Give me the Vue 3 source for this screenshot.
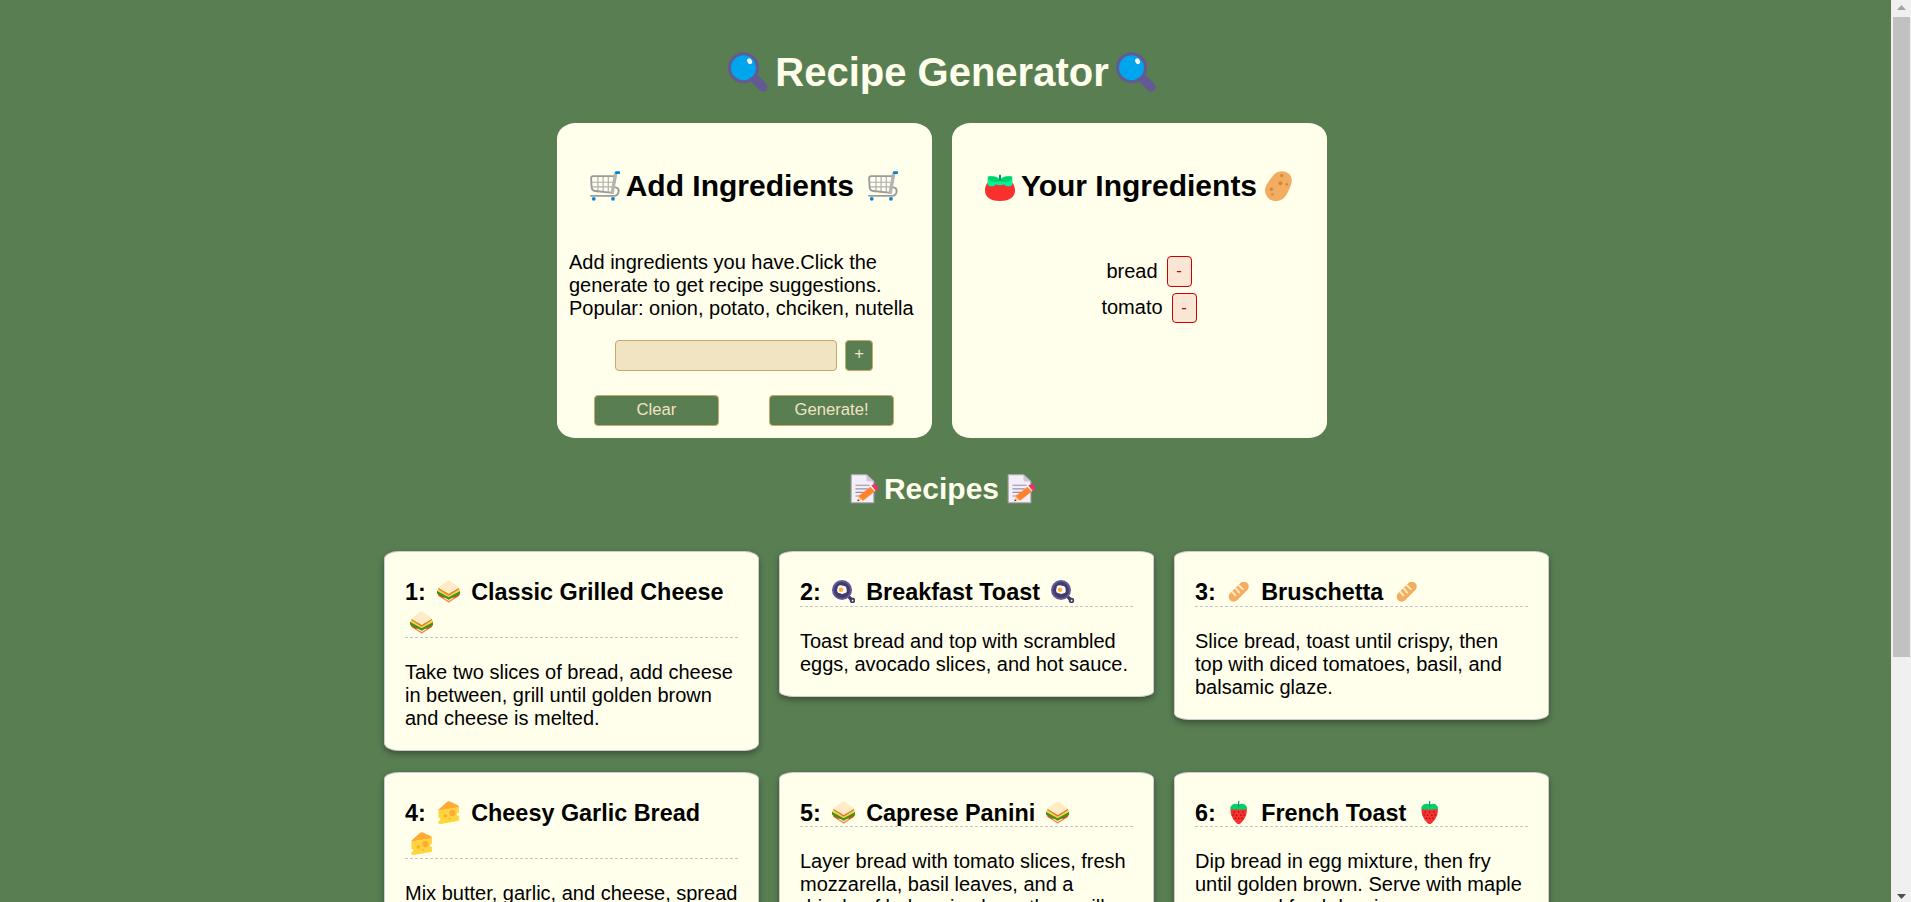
<script setup>
import { ref } from 'vue'

const query = ref('')
const ingredients = ref(['bread', 'tomato'])
const recipes = [
  { icon: 'sandwich', title: 'Classic Grilled Cheese', text: 'Take two slices of bread, add cheese in between, grill until golden brown and cheese is melted.' },
  { icon: 'pan', title: 'Breakfast Toast', text: 'Toast bread and top with scrambled eggs, avocado slices, and hot sauce.' },
  { icon: 'baguette', title: 'Bruschetta', text: 'Slice bread, toast until crispy, then top with diced tomatoes, basil, and balsamic glaze.' },
  { icon: 'cheese', title: 'Cheesy Garlic Bread', text: 'Mix butter, garlic, and cheese, spread on bread, and bake until bubbly.' },
  { icon: 'sandwich', title: 'Caprese Panini', text: 'Layer bread with tomato slices, fresh mozzarella, basil leaves, and a drizzle of balsamic glaze, then grill.' },
  { icon: 'strawberry', title: 'French Toast', text: 'Dip bread in egg mixture, then fry until golden brown. Serve with maple syrup and fresh berries.' },
]

function add() {
  const name = query.value.trim()
  if (name) ingredients.value.push(name)
  query.value = ''
}
</script>

<template>
  <svg class="sprite" aria-hidden="true">
    <symbol id="magnifier" viewBox="0 0 32 32">
      <path d="M22 22l6 6" stroke="#635994" stroke-width="7.4" stroke-linecap="round" />
      <circle cx="12.4" cy="12.6" r="11.2" fill="#00a6ed" stroke="#635994" stroke-width="2.4" />
      <ellipse cx="17.3" cy="7.4" rx="1.8" ry="2.4" transform="rotate(-32 17.3 7.4)" fill="#fff" />
    </symbol>
    <symbol id="cart" viewBox="0 0 32 32">
      <g fill="none" stroke="#9b9b9b" stroke-linecap="round" stroke-linejoin="round">
        <path d="M2.5 12h23M2 17h22.5M8.5 6v16M14 6v16M19.5 6v16" stroke="#b0b0b0" stroke-width="1.3" />
        <path d="M26.5 5.5H3.5Q1 5.5 1.2 8l.5 9q.3 4 3.8 4.3l19 2" stroke-width="2" />
        <path d="M27.3 3.5L23.8 22.5" stroke="#b4b4b4" stroke-width="3.6" />
        <path d="M27 17.5q4 .5 3.500 4.500-.6 4.500-5 4.500H1" stroke-width="2" />
      </g>
      <path d="M28 1.700h3.200" stroke="#0084ce" stroke-width="2.800" stroke-linecap="round" />
      <circle cx="4" cy="29.600" r="2" fill="#0084ce" />
      <circle cx="24.500" cy="29.600" r="2" fill="#0084ce" />
    </symbol>
    <symbol id="tomato" viewBox="0 0 32 32">
      <path d="M16 9C6 7 0 13 0 20.500c0 7 5 11.500 16 11.500s16-4.500 16-11.500C32 13 26 7 16 9z" fill="#f8312f" />
      <path d="M16 9C13 5 8 6 3 6c0 4-1 7 1 10 3 1 6 0 8-2 2 1.500 6 1.500 8 0 2 2 5 3 8 2 2-3 1-6 1-10-5 0-10-1-13 3z" fill="#00f397" />
      <path d="M3 6c6-1 10 0 13 4C13 13 7 12 3.500 9zM29 6c-6-1-10 0-13 4 3 3 9 2 12.500-1z" fill="#00d26a" />
      <path d="M16 9V4.800" stroke="#008463" stroke-width="2" stroke-linecap="round" />
    </symbol>
    <symbol id="potato" viewBox="0 0 32 32">
      <path d="M12 3.500C16-.5 23-.8 27 2.500c5 4 4 10 2 14.500-2 4-3 8-6 11-4 4.500-11 5.500-16 2-5.500-4-6-11-3-15.500C6.500 10.500 9 6.500 12 3.500z" fill="#f3ad61" />
      <g fill="#d3883e"><circle cx="20" cy="5" r="1.700" /><circle cx="18.500" cy="13" r="2.100" /><circle cx="25.300" cy="14.200" r="1.400" /><circle cx="9" cy="19.500" r="1.900" /><circle cx="10" cy="25" r="1.400" /></g>
    </symbol>
    <symbol id="memo" viewBox="0 0 32 32">
      <path d="M3.500.8h16.200L27.500 8v22.500H3.500z" fill="#f3eef8" stroke="#b4acbc" stroke-width="1.200" stroke-linejoin="round" />
      <path d="M19.700.8L27.500 8h-6.300q-1.500 0-1.500-1.500z" fill="#cdc4d6" />
      <path d="M8 12h15M8 15.800h13M8 19.600h9M8 23.400h5" stroke="#998ea4" stroke-width="1.200" />
      <path d="M10 29l1.500-6 5 4.500z" fill="#ffce7c" />
      <path d="M11.200 23.500L24 13.500l4.500 5.200L16 28.500z" fill="#ff822d" />
      <path d="M24 13.500l2-1.600 4.500 5.200-2 1.600z" fill="#f4f4f4" />
      <path d="M25.500 12.300q2.500-2 5 .4 2.500 2.800-.5 5.300z" fill="#f92f60" stroke="#f92f60" />
      <path d="M10 29l.5-2 1.700 1.400z" fill="#321b41" />
    </symbol>
    <symbol id="sandwich" viewBox="0 0 32 32">
      <path d="M2 20l14-7 14 7v2L16 31 2 22z" fill="#e39d56" />
      <path d="M2 17l14 8 14-8v4.500L16 29.500 2 21.500z" fill="#f8432f" />
      <path d="M9 22l7 4 7-4v3l-7 4-7-4z" fill="#ffe3b0" />
      <path d="M0 14.500l16 7.500L32 14.500v4q-1 2-3 2L25 22.500l-2 1.500-3 .5-4 2.500-4-2.500-3-.5L7 22.500l-4-2q-2 0-3-2z" fill="#44911b" />
      <path d="M1 12l15 8 15-8v3.500l-15 8-15-8z" fill="#fcd53f" />
      <path d="M2 10.500L16 19l14-8.500v2.200L16 21.500 2 12.700z" fill="#d67d39" />
      <path d="M14.500 1q1.500-.8 3 0L30 10 16 19 2 10z" fill="#ffebc4" />
    </symbol>
    <symbol id="pan" viewBox="0 0 32 32">
      <path d="M22 22l4 4" stroke="#433b6b" stroke-width="4.400" stroke-linecap="round" />
      <circle cx="28" cy="28" r="2.600" fill="none" stroke="#433b6b" stroke-width="2.400" />
      <circle cx="13.700" cy="13.700" r="12.300" fill="#433b6b" stroke="#635994" stroke-width="2.800" />
      <path d="M8 9q3-3 7-1 5 0 5 5 1 5-3 5-3 2-6 0-4 0-4-4z" fill="#fff" />
      <circle cx="12.300" cy="13.300" r="3" fill="#ffb02e" />
    </symbol>
    <symbol id="baguette" viewBox="0 0 32 32">
      <path d="M9 23L23 9" stroke="#f3ad61" stroke-width="13.500" stroke-linecap="round" />
      <path d="M7 16l4.500 5M12 11.500l4.500 5.500M16.500 7.500l5 5" fill="none" stroke="#ffebc4" stroke-width="2.700" stroke-linecap="round" />
    </symbol>
    <symbol id="cheese" viewBox="0 0 32 32">
      <path d="M2 13L30 8.500V16q-3 0-2.800 2.500.3 2 2.800 1.500V27L5 31.500q-3 .5-3-2.500v-1.500q3-.5 2.500-3Q4 23 2 23z" fill="#ffd53e" />
      <path d="M2 13q0-2 2-3L14 1q1.500-1.200 3.500-.3L28 5.500q2 1 2 3z" fill="#ffaa32" />
      <g fill="#ffaa32"><circle cx="21" cy="16.500" r="4.200" /><circle cx="11.500" cy="20.500" r="2.500" /><circle cx="17.500" cy="24.500" r="1.300" /></g>
    </symbol>
    <symbol id="strawberry" viewBox="0 0 32 32">
      <path d="M5 11Q4 19 8.500 25q3 4 6 6.500 1.500 1 3 0 3-2.500 6-6.500Q28 19 27 11 16 5 5 11z" fill="#f8312f" />
      <path d="M16 5C11 2 5 5 4.300 9.800q1 3 3.700.7 2 3 4.500.5 1.700 2.500 3.500 0 1.800 2.500 3.500 0 2.500 2.500 4.500-.5 2.700 2.300 3.700-.7C27 5 21 2 16 5z" fill="#00d26a" />
      <path d="M16 7V.8" stroke="#008463" stroke-width="1.500" stroke-linecap="round" />
      <g fill="#7d0a18"><circle cx="10" cy="15" r="1" /><circle cx="16" cy="15" r="1" /><circle cx="22" cy="15" r="1" /><circle cx="13" cy="19.500" r="1" /><circle cx="19" cy="19.500" r="1" /><circle cx="23.500" cy="19" r="1" /><circle cx="8.500" cy="19" r="1" /><circle cx="16" cy="24" r="1" /><circle cx="11.500" cy="23.500" r="1" /><circle cx="20.500" cy="23.500" r="1" /></g>
    </symbol>
  </svg>

  <div class="window">
    <main class="page">
      <h1><svg class="emoji"><use href="#magnifier" /></svg>Recipe Generator<svg class="emoji"><use href="#magnifier" /></svg></h1>

      <div class="panels">
        <section class="panel">
          <h2><svg class="emoji"><use href="#cart" /></svg>Add Ingredients <svg class="emoji"><use href="#cart" /></svg></h2>
          <p>Add ingredients you have.Click the generate to get recipe suggestions. Popular: onion, potato, chciken, nutella</p>
          <form class="entry" @submit.prevent="add">
            <input v-model="query" type="text" />
            <button class="plus">+</button>
          </form>
          <div class="actions">
            <button type="button" @click="ingredients = []">Clear</button>
            <button type="button">Generate!</button>
          </div>
        </section>

        <section class="panel">
          <h2><svg class="emoji"><use href="#tomato" /></svg>Your Ingredients<svg class="emoji"><use href="#potato" /></svg></h2>
          <ul>
            <li v-for="(item, i) in ingredients" :key="item">
              <span>{{ item }}</span>
              <button class="remove" @click="ingredients.splice(i, 1)">-</button>
            </li>
          </ul>
        </section>
      </div>

      <h2 class="recipes-title"><svg class="emoji"><use href="#memo" /></svg>Recipes<svg class="emoji"><use href="#memo" /></svg></h2>

      <div class="recipes">
        <article v-for="(r, i) in recipes" :key="r.title" class="recipe">
          <h3>{{ i + 1 }}: <svg class="emoji"><use :href="'#' + r.icon" /></svg> {{ r.title }} <svg class="emoji"><use :href="'#' + r.icon" /></svg></h3>
          <p>{{ r.text }}</p>
        </article>
      </div>
    </main>

    <aside class="scrollbar">
      <svg class="arrow" viewBox="0 0 9 5"><path d="M0 5L4.500 0 9 5z" fill="#a3a3a3" /></svg>
      <div class="thumb"></div>
      <svg class="arrow down" viewBox="0 0 9 5"><path d="M0 0h9L4.500 5z" fill="#505050" /></svg>
    </aside>
  </div>
</template>

<style>
body {
  background: #597e52;
  overflow: hidden;
}
</style>

<style scoped>
* {
  box-sizing: border-box;
}
.sprite {
  display: block;
  width: 0;
  height: 0;
}
.window {
  display: flex;
  width: 100%;
  height: 902px;
  overflow: hidden;
  background: #597e52;
  font-family: "Liberation Sans", Arial, sans-serif;
  font-size: 20px;
  line-height: 23px;
  color: #000;
}
.page {
  flex: 1;
  min-width: 0;
  height: 902px;
  overflow: hidden;
}
.emoji {
  width: 1em;
  height: 1em;
  margin: 0 0.185em;
  vertical-align: -0.15em;
}
h1 {
  margin: 46px 7px 24px 0;
  font-size: 40px;
  line-height: 53px;
  text-align: center;
  color: #ffffec;
}
h2 {
  margin: 0;
  font-size: 30px;
  line-height: 40px;
  text-align: center;
}
.panels {
  display: flex;
  justify-content: center;
  gap: 20px;
  margin-right: 7px;
}
.panel {
  width: 375px;
  height: 315px;
  padding-top: 43px;
  border-radius: 5%;
  background: #ffffec;
}
.panel h2 {
  margin-right: 1px;
}
.panel p {
  margin: 45px 12px 20px;
}
input,
button {
  display: block;
  font-family: inherit;
  font-size: 16.67px;
  border-radius: 4px;
  height: 31px;
}
input {
  width: 222px;
  border: 1px solid #c6a969;
  background: #f1e4c3;
}
button {
  padding: 0 0 2px;
  border: 1px solid #c6a969;
  background: #597e52;
  color: #f1e4c3;
}
.entry {
  display: flex;
  gap: 8px;
  padding-left: 58px;
}
.plus {
  width: 28px;
  padding-bottom: 4px;
}
.actions {
  display: flex;
  gap: 50px;
  margin-top: 24px;
  padding-left: 37px;
}
.actions button {
  width: 125px;
}
ul {
  list-style: none;
  margin: 50px 0 0;
  padding: 0 0 0 19px;
}
li {
  display: flex;
  justify-content: center;
  align-items: center;
  gap: 9px;
  height: 31px;
  margin-bottom: 5px;
}
.remove {
  width: 25px;
  padding-bottom: 1px;
  border-color: #c00;
  background: #fae6d4;
  color: #c00;
}
li + li .remove {
  height: 30px;
  margin-top: 1px;
}
.recipes-title {
  margin: 31px 8px 42px 0;
  color: #ffffec;
}
.recipes {
  display: grid;
  grid-template-columns: repeat(3, 375px);
  justify-content: center;
  align-items: start;
  gap: 20.700px 20px;
  padding-left: 42px;
}
.recipe {
  padding: 22px 20px 20px;
  border: 1px solid #ccc;
  border-radius: 4%;
  background: #ffffec;
  box-shadow: 0 3px 6px rgba(0, 0, 0, 0.35);
}
.recipe h3 {
  margin: 0 0 23px;
  border-bottom: 1px dashed #c4c4c4;
  font-size: 23.400px;
  line-height: 27px;
}
.recipe h3 .emoji {
  margin: 5.700px 0.185em 0 0.2em;
}
.recipe p {
  margin: 0;
}
.scrollbar {
  display: flex;
  flex-direction: column;
  width: 20px;
  padding: 5px 1px 3px 2px;
  background: #f0f0f0;
}
.arrow {
  width: 9px;
  height: 5px;
  margin-left: 4px;
}
.thumb {
  height: 640px;
  margin-top: 7px;
  background: #c1c1c1;
}
.down {
  margin-top: auto;
}
</style>
